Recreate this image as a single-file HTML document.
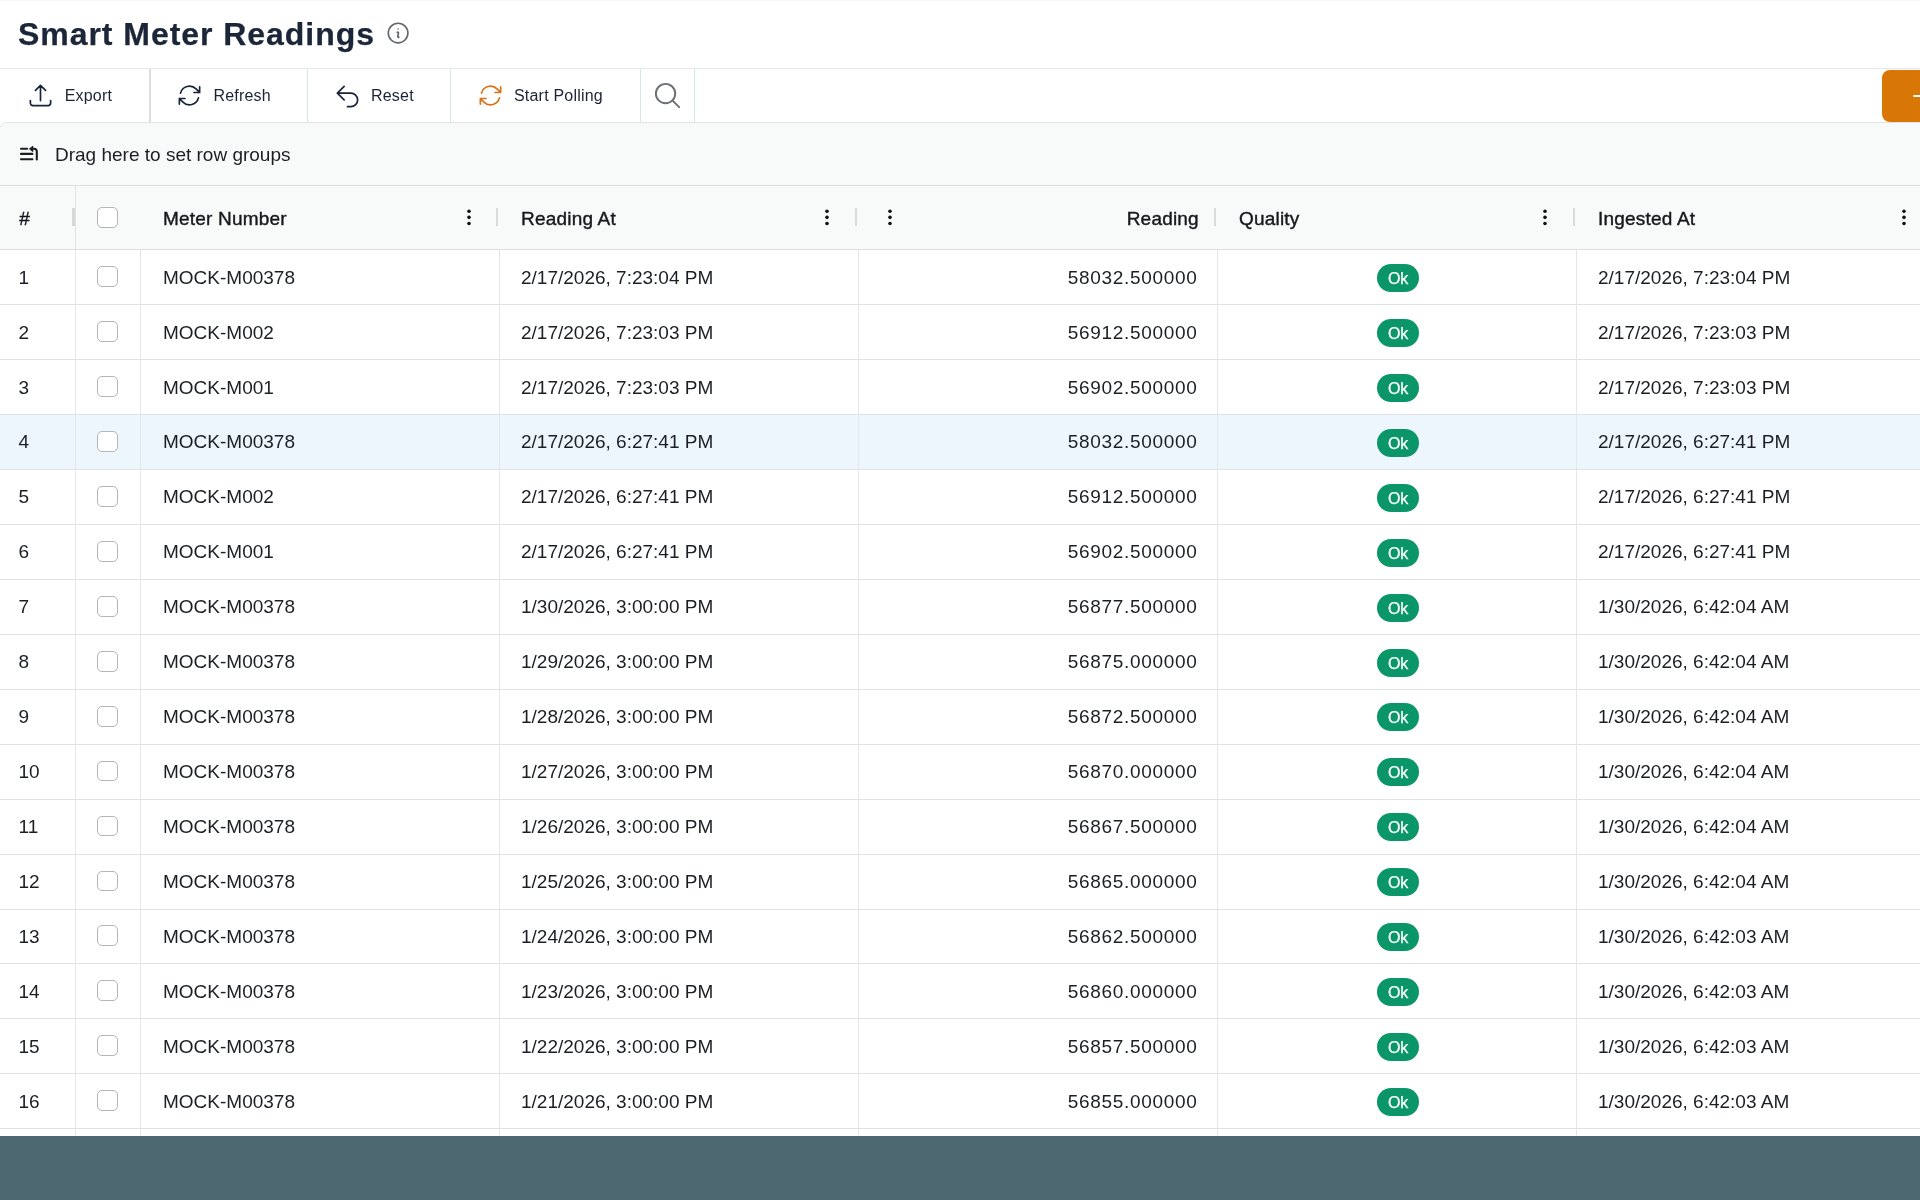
<!DOCTYPE html><html><head><meta charset="utf-8"><title>Smart Meter Readings</title><style>
*{box-sizing:border-box;margin:0;padding:0}
html,body{width:1920px;height:1200px;overflow:hidden;background:#fff}
body{position:relative;will-change:transform;font-family:"Liberation Sans",sans-serif;color:#1b1f24}
.abs{position:absolute}
.title{left:18px;top:14px;font-size:32px;font-weight:bold;color:#1b2638;letter-spacing:0.95px;line-height:40px;white-space:nowrap;-webkit-text-stroke:0.25px #1b2638}
.tb{top:68px;left:0;width:1920px;height:55px;border-top:1px solid #e6e9ea}
.sep{top:69px;width:1px;height:53px;background:#d6e4e6}
.btnlbl{font-size:16px;color:#1a2436;line-height:20px;top:86px;white-space:nowrap;letter-spacing:0.2px}
.orange{left:1882px;top:70px;width:80px;height:52px;background:#d97706;border-radius:8px}
.grid{left:-1.5px;top:122px;width:1940px;height:1100px;border:1px solid #dfe3e4;border-radius:8px 0 0 0;overflow:hidden;background:#fff}
.gpanel{left:0;top:123px;width:1920px;height:63px;background:#f8f9f9;border-bottom:1px solid #dcdfe0}
.hdr{left:0;top:186px;width:1920px;height:64px;background:#f8f9f9;border-bottom:1px solid #dcdfe0}
.txt{white-space:nowrap;line-height:24px}
.cell{font-size:19px;color:#1b1f24}
.hcell{font-size:19px;color:#15191e;-webkit-text-stroke:0.4px #15191e;letter-spacing:0.2px}
.row{left:0;width:1920px;height:55px;border-bottom:1px solid #dfe1e2;background:#fff}
.hl1{left:0;width:1920px;height:1px;background:#dfe1e2}
.vl{width:1px;background:#e4e6e7}
.cb{width:20.8px;height:20.8px;border:1.6px solid #b3b5b6;border-radius:5px;background:#fff}
.badge{width:42px;height:28px;border-radius:14px;background:#0b966a;color:#fff;font-size:16px;line-height:29.5px;text-align:center;letter-spacing:-0.2px;-webkit-text-stroke:0.25px #fff}
.dots{width:4px}
.dot{position:absolute;left:0;width:3.6px;height:3.6px;border-radius:50%;background:#111}
.handle{width:2.2px;height:18.2px;background:#d8dadb;top:208.3px}
.footer{left:0;top:1136px;width:1920px;height:64px;background:#4d6771}
</style></head><body>
<div class="abs" style="left:0;top:0;width:1920px;height:1px;background:#f6f7f7"></div>
<div class="abs title">Smart Meter Readings</div>
<svg class="abs" style="left:384.5px;top:19.5px" width="26.2" height="26.2" viewBox="0 0 24 24" fill="none" stroke="#64686d" stroke-width="1.5" stroke-linecap="round" stroke-linejoin="round"><path d="M11.25 11.25l.041-.02a.75.75 0 011.063.852l-.708 2.836a.75.75 0 001.063.853l.041-.021M21 12a9 9 0 11-18 0 9 9 0 0118 0zm-9-3.75h.008v.008H12V8.25z"/></svg>
<div class="abs tb"></div>
<div class="abs sep" style="left:149px;width:2px;background:#dcdcdc"></div>
<div class="abs sep" style="left:307px;width:1px;background:#d6e6e8"></div>
<div class="abs sep" style="left:450px;width:1px;background:#d6e6e8"></div>
<div class="abs sep" style="left:640px;width:1px;background:#d6e6e8"></div>
<div class="abs sep" style="left:694px;width:1px;background:#d6e6e8"></div>
<svg class="abs" style="left:27.4px;top:82.4px" width="27" height="27" viewBox="0 0 24 24" fill="none" stroke="#19233a" stroke-width="1.5" stroke-linecap="round" stroke-linejoin="round"><path d="M3 16.5v2.25A2.25 2.25 0 005.25 21h13.5A2.25 2.25 0 0021 18.75V16.5m-13.5-9L12 3m0 0l4.5 4.5M12 3v13.5"/></svg>
<svg class="abs" style="left:176px;top:82px" width="27" height="27" viewBox="0 0 24 24" fill="none" stroke="#19233a" stroke-width="1.5" stroke-linecap="round" stroke-linejoin="round"><path d="M16.023 9.348h4.992v-.001M2.985 19.644v-4.992m0 0h4.992m-4.993 0l3.181 3.183a8.25 8.25 0 0013.803-3.7M4.031 9.865a8.25 8.25 0 0113.803-3.7l3.181 3.182m0-4.991v4.99"/></svg>
<svg class="abs" style="left:334.2px;top:82.6px" width="27" height="27" viewBox="0 0 24 24" fill="none" stroke="#19233a" stroke-width="1.5" stroke-linecap="round" stroke-linejoin="round"><path d="M9 15L3 9m0 0l6-6M3 9h12a6 6 0 010 12h-3"/></svg>
<svg class="abs" style="left:477px;top:82px" width="27" height="27" viewBox="0 0 24 24" fill="none" stroke="#d9731a" stroke-width="1.5" stroke-linecap="round" stroke-linejoin="round"><path d="M16.023 9.348h4.992v-.001M2.985 19.644v-4.992m0 0h4.992m-4.993 0l3.181 3.183a8.25 8.25 0 0013.803-3.7M4.031 9.865a8.25 8.25 0 0113.803-3.7l3.181 3.182m0-4.991v4.99"/></svg>
<svg class="abs" style="left:652px;top:80px" width="31" height="31" viewBox="0 0 24 24" fill="none" stroke="#6b6f73" stroke-width="1.5" stroke-linecap="round" stroke-linejoin="round"><path d="M21 21l-5.197-5.197m0 0A7.5 7.5 0 105.196 5.196a7.5 7.5 0 0010.607 10.607z"/></svg>
<div class="abs btnlbl" style="left:64.7px">Export</div>
<div class="abs btnlbl" style="left:213.5px">Refresh</div>
<div class="abs btnlbl" style="left:371px">Reset</div>
<div class="abs btnlbl" style="left:514px">Start Polling</div>
<div class="abs orange"></div>
<div class="abs" style="left:1912.5px;top:95px;width:10px;height:1.6px;background:#fff;border-radius:1px"></div>
<div class="abs grid"></div>
<div class="abs gpanel" style="left:-0.5px;width:1925px;border-radius:7px 0 0 0"></div>
<svg class="abs" style="left:18px;top:144px" width="24" height="20" viewBox="0 0 24 20" fill="none" stroke="#1a1d21" stroke-width="2.1" stroke-linecap="round"><path d="M3 4.7h6.2M3 9.9h11.4M3 15.2h11.4"/><path d="M18.8 15.5V7.5Q18.8 4.7 16 4.7H13.5"/><path d="M11.7 4.7 L14.8 2.2 L14.8 7.2 Z" fill="#1a1d21" stroke-width="1"/></svg>
<div class="abs txt cell" style="left:55px;top:143px;color:#1b1f24">Drag here to set row groups</div>
<div class="abs hdr"></div>
<div class="abs vl" style="left:75px;top:186px;height:63px;background:#e0e3e4"></div>
<div class="abs handle" style="left:72.2px;width:3px;background:#d5d7d8"></div>
<div class="abs txt hcell" style="left:19.3px;top:206.5px">#</div>
<div class="abs cb" style="left:97px;top:207px"></div>
<div class="abs txt hcell" style="left:163px;top:207px">Meter Number</div>
<div class="abs txt hcell" style="left:521px;top:207px">Reading At</div>
<div class="abs txt hcell" style="left:1126.7px;top:207px">Reading</div>
<div class="abs txt hcell" style="left:1239px;top:207px">Quality</div>
<div class="abs txt hcell" style="left:1598px;top:207px">Ingested At</div>
<div class="abs handle" style="left:496px"></div>
<div class="abs handle" style="left:855px"></div>
<div class="abs handle" style="left:1214px"></div>
<div class="abs handle" style="left:1573px"></div>
<svg class="abs" style="left:465.5px;top:208px" width="6" height="20" viewBox="0 0 6 20"><circle cx="3" cy="3.25" r="1.8" fill="#111"/><circle cx="3" cy="9.35" r="1.8" fill="#111"/><circle cx="3" cy="15.55" r="1.8" fill="#111"/></svg>
<svg class="abs" style="left:824px;top:208px" width="6" height="20" viewBox="0 0 6 20"><circle cx="3" cy="3.25" r="1.8" fill="#111"/><circle cx="3" cy="9.35" r="1.8" fill="#111"/><circle cx="3" cy="15.55" r="1.8" fill="#111"/></svg>
<svg class="abs" style="left:886.7px;top:208px" width="6" height="20" viewBox="0 0 6 20"><circle cx="3" cy="3.25" r="1.8" fill="#111"/><circle cx="3" cy="9.35" r="1.8" fill="#111"/><circle cx="3" cy="15.55" r="1.8" fill="#111"/></svg>
<svg class="abs" style="left:1542.4px;top:208px" width="6" height="20" viewBox="0 0 6 20"><circle cx="3" cy="3.25" r="1.8" fill="#111"/><circle cx="3" cy="9.35" r="1.8" fill="#111"/><circle cx="3" cy="15.55" r="1.8" fill="#111"/></svg>
<svg class="abs" style="left:1900.7px;top:208px" width="6" height="20" viewBox="0 0 6 20"><circle cx="3" cy="3.25" r="1.8" fill="#111"/><circle cx="3" cy="9.35" r="1.8" fill="#111"/><circle cx="3" cy="15.55" r="1.8" fill="#111"/></svg>
<div class="abs txt cell" style="left:18.5px;top:265.7px">1</div>
<div class="abs cb" style="left:97px;top:266.3px"></div>
<div class="abs txt cell" style="left:163px;top:265.7px">MOCK-M00378</div>
<div class="abs txt cell" style="left:521px;top:265.7px">2/17/2026, 7:23:04 PM</div>
<div class="abs txt cell" style="right:722.4000000000001px;top:265.7px;letter-spacing:0.7px">58032.500000</div>
<div class="abs badge" style="left:1377px;top:264.0px">Ok</div>
<div class="abs txt cell" style="left:1598px;top:265.7px">2/17/2026, 7:23:04 PM</div>
<div class="abs txt cell" style="left:18.5px;top:320.63px">2</div>
<div class="abs cb" style="left:97px;top:321.23px"></div>
<div class="abs txt cell" style="left:163px;top:320.63px">MOCK-M002</div>
<div class="abs txt cell" style="left:521px;top:320.63px">2/17/2026, 7:23:03 PM</div>
<div class="abs txt cell" style="right:722.4000000000001px;top:320.63px;letter-spacing:0.7px">56912.500000</div>
<div class="abs badge" style="left:1377px;top:318.93px">Ok</div>
<div class="abs txt cell" style="left:1598px;top:320.63px">2/17/2026, 7:23:03 PM</div>
<div class="abs txt cell" style="left:18.5px;top:375.56px">3</div>
<div class="abs cb" style="left:97px;top:376.16px"></div>
<div class="abs txt cell" style="left:163px;top:375.56px">MOCK-M001</div>
<div class="abs txt cell" style="left:521px;top:375.56px">2/17/2026, 7:23:03 PM</div>
<div class="abs txt cell" style="right:722.4000000000001px;top:375.56px;letter-spacing:0.7px">56902.500000</div>
<div class="abs badge" style="left:1377px;top:373.86px">Ok</div>
<div class="abs txt cell" style="left:1598px;top:375.56px">2/17/2026, 7:23:03 PM</div>
<div class="abs" style="left:0;width:1920px;top:414.79px;height:54px;background:#edf5fd"></div>
<div class="abs txt cell" style="left:18.5px;top:430.49px">4</div>
<div class="abs cb" style="left:97px;top:431.09px"></div>
<div class="abs txt cell" style="left:163px;top:430.49px">MOCK-M00378</div>
<div class="abs txt cell" style="left:521px;top:430.49px">2/17/2026, 6:27:41 PM</div>
<div class="abs txt cell" style="right:722.4000000000001px;top:430.49px;letter-spacing:0.7px">58032.500000</div>
<div class="abs badge" style="left:1377px;top:428.79px">Ok</div>
<div class="abs txt cell" style="left:1598px;top:430.49px">2/17/2026, 6:27:41 PM</div>
<div class="abs txt cell" style="left:18.5px;top:485.42px">5</div>
<div class="abs cb" style="left:97px;top:486.02px"></div>
<div class="abs txt cell" style="left:163px;top:485.42px">MOCK-M002</div>
<div class="abs txt cell" style="left:521px;top:485.42px">2/17/2026, 6:27:41 PM</div>
<div class="abs txt cell" style="right:722.4000000000001px;top:485.42px;letter-spacing:0.7px">56912.500000</div>
<div class="abs badge" style="left:1377px;top:483.72px">Ok</div>
<div class="abs txt cell" style="left:1598px;top:485.42px">2/17/2026, 6:27:41 PM</div>
<div class="abs txt cell" style="left:18.5px;top:540.35px">6</div>
<div class="abs cb" style="left:97px;top:540.95px"></div>
<div class="abs txt cell" style="left:163px;top:540.35px">MOCK-M001</div>
<div class="abs txt cell" style="left:521px;top:540.35px">2/17/2026, 6:27:41 PM</div>
<div class="abs txt cell" style="right:722.4000000000001px;top:540.35px;letter-spacing:0.7px">56902.500000</div>
<div class="abs badge" style="left:1377px;top:538.65px">Ok</div>
<div class="abs txt cell" style="left:1598px;top:540.35px">2/17/2026, 6:27:41 PM</div>
<div class="abs txt cell" style="left:18.5px;top:595.28px">7</div>
<div class="abs cb" style="left:97px;top:595.88px"></div>
<div class="abs txt cell" style="left:163px;top:595.28px">MOCK-M00378</div>
<div class="abs txt cell" style="left:521px;top:595.28px">1/30/2026, 3:00:00 PM</div>
<div class="abs txt cell" style="right:722.4000000000001px;top:595.28px;letter-spacing:0.7px">56877.500000</div>
<div class="abs badge" style="left:1377px;top:593.58px">Ok</div>
<div class="abs txt cell" style="left:1598px;top:595.28px">1/30/2026, 6:42:04 AM</div>
<div class="abs txt cell" style="left:18.5px;top:650.21px">8</div>
<div class="abs cb" style="left:97px;top:650.81px"></div>
<div class="abs txt cell" style="left:163px;top:650.21px">MOCK-M00378</div>
<div class="abs txt cell" style="left:521px;top:650.21px">1/29/2026, 3:00:00 PM</div>
<div class="abs txt cell" style="right:722.4000000000001px;top:650.21px;letter-spacing:0.7px">56875.000000</div>
<div class="abs badge" style="left:1377px;top:648.51px">Ok</div>
<div class="abs txt cell" style="left:1598px;top:650.21px">1/30/2026, 6:42:04 AM</div>
<div class="abs txt cell" style="left:18.5px;top:705.14px">9</div>
<div class="abs cb" style="left:97px;top:705.74px"></div>
<div class="abs txt cell" style="left:163px;top:705.14px">MOCK-M00378</div>
<div class="abs txt cell" style="left:521px;top:705.14px">1/28/2026, 3:00:00 PM</div>
<div class="abs txt cell" style="right:722.4000000000001px;top:705.14px;letter-spacing:0.7px">56872.500000</div>
<div class="abs badge" style="left:1377px;top:703.44px">Ok</div>
<div class="abs txt cell" style="left:1598px;top:705.14px">1/30/2026, 6:42:04 AM</div>
<div class="abs txt cell" style="left:18.5px;top:760.07px">10</div>
<div class="abs cb" style="left:97px;top:760.67px"></div>
<div class="abs txt cell" style="left:163px;top:760.07px">MOCK-M00378</div>
<div class="abs txt cell" style="left:521px;top:760.07px">1/27/2026, 3:00:00 PM</div>
<div class="abs txt cell" style="right:722.4000000000001px;top:760.07px;letter-spacing:0.7px">56870.000000</div>
<div class="abs badge" style="left:1377px;top:758.37px">Ok</div>
<div class="abs txt cell" style="left:1598px;top:760.07px">1/30/2026, 6:42:04 AM</div>
<div class="abs txt cell" style="left:18.5px;top:815.0px">11</div>
<div class="abs cb" style="left:97px;top:815.6px"></div>
<div class="abs txt cell" style="left:163px;top:815.0px">MOCK-M00378</div>
<div class="abs txt cell" style="left:521px;top:815.0px">1/26/2026, 3:00:00 PM</div>
<div class="abs txt cell" style="right:722.4000000000001px;top:815.0px;letter-spacing:0.7px">56867.500000</div>
<div class="abs badge" style="left:1377px;top:813.3px">Ok</div>
<div class="abs txt cell" style="left:1598px;top:815.0px">1/30/2026, 6:42:04 AM</div>
<div class="abs txt cell" style="left:18.5px;top:869.93px">12</div>
<div class="abs cb" style="left:97px;top:870.53px"></div>
<div class="abs txt cell" style="left:163px;top:869.93px">MOCK-M00378</div>
<div class="abs txt cell" style="left:521px;top:869.93px">1/25/2026, 3:00:00 PM</div>
<div class="abs txt cell" style="right:722.4000000000001px;top:869.93px;letter-spacing:0.7px">56865.000000</div>
<div class="abs badge" style="left:1377px;top:868.23px">Ok</div>
<div class="abs txt cell" style="left:1598px;top:869.93px">1/30/2026, 6:42:04 AM</div>
<div class="abs txt cell" style="left:18.5px;top:924.86px">13</div>
<div class="abs cb" style="left:97px;top:925.46px"></div>
<div class="abs txt cell" style="left:163px;top:924.86px">MOCK-M00378</div>
<div class="abs txt cell" style="left:521px;top:924.86px">1/24/2026, 3:00:00 PM</div>
<div class="abs txt cell" style="right:722.4000000000001px;top:924.86px;letter-spacing:0.7px">56862.500000</div>
<div class="abs badge" style="left:1377px;top:923.16px">Ok</div>
<div class="abs txt cell" style="left:1598px;top:924.86px">1/30/2026, 6:42:03 AM</div>
<div class="abs txt cell" style="left:18.5px;top:979.79px">14</div>
<div class="abs cb" style="left:97px;top:980.39px"></div>
<div class="abs txt cell" style="left:163px;top:979.79px">MOCK-M00378</div>
<div class="abs txt cell" style="left:521px;top:979.79px">1/23/2026, 3:00:00 PM</div>
<div class="abs txt cell" style="right:722.4000000000001px;top:979.79px;letter-spacing:0.7px">56860.000000</div>
<div class="abs badge" style="left:1377px;top:978.09px">Ok</div>
<div class="abs txt cell" style="left:1598px;top:979.79px">1/30/2026, 6:42:03 AM</div>
<div class="abs txt cell" style="left:18.5px;top:1034.72px">15</div>
<div class="abs cb" style="left:97px;top:1035.32px"></div>
<div class="abs txt cell" style="left:163px;top:1034.72px">MOCK-M00378</div>
<div class="abs txt cell" style="left:521px;top:1034.72px">1/22/2026, 3:00:00 PM</div>
<div class="abs txt cell" style="right:722.4000000000001px;top:1034.72px;letter-spacing:0.7px">56857.500000</div>
<div class="abs badge" style="left:1377px;top:1033.02px">Ok</div>
<div class="abs txt cell" style="left:1598px;top:1034.72px">1/30/2026, 6:42:03 AM</div>
<div class="abs txt cell" style="left:18.5px;top:1089.65px">16</div>
<div class="abs cb" style="left:97px;top:1090.25px"></div>
<div class="abs txt cell" style="left:163px;top:1089.65px">MOCK-M00378</div>
<div class="abs txt cell" style="left:521px;top:1089.65px">1/21/2026, 3:00:00 PM</div>
<div class="abs txt cell" style="right:722.4000000000001px;top:1089.65px;letter-spacing:0.7px">56855.000000</div>
<div class="abs badge" style="left:1377px;top:1087.95px">Ok</div>
<div class="abs txt cell" style="left:1598px;top:1089.65px">1/30/2026, 6:42:03 AM</div>
<div class="abs hl1" style="top:304.3px"></div>
<div class="abs hl1" style="top:359.23px"></div>
<div class="abs hl1" style="top:414.16px"></div>
<div class="abs hl1" style="top:469.09px"></div>
<div class="abs hl1" style="top:524.02px"></div>
<div class="abs hl1" style="top:578.95px"></div>
<div class="abs hl1" style="top:633.88px"></div>
<div class="abs hl1" style="top:688.81px"></div>
<div class="abs hl1" style="top:743.74px"></div>
<div class="abs hl1" style="top:798.67px"></div>
<div class="abs hl1" style="top:853.6px"></div>
<div class="abs hl1" style="top:908.53px"></div>
<div class="abs hl1" style="top:963.46px"></div>
<div class="abs hl1" style="top:1018.39px"></div>
<div class="abs hl1" style="top:1073.32px"></div>
<div class="abs hl1" style="top:1128.25px"></div>
<div class="abs hl1" style="top:1183.18px"></div>
<div class="abs vl" style="left:75px;top:250px;height:900px"></div>
<div class="abs vl" style="left:140px;top:250px;height:900px"></div>
<div class="abs vl" style="left:499px;top:250px;height:900px"></div>
<div class="abs vl" style="left:857.6px;top:250px;height:900px"></div>
<div class="abs vl" style="left:1217px;top:250px;height:900px"></div>
<div class="abs vl" style="left:1575.6px;top:250px;height:900px"></div>
<div class="abs footer"></div>
</body></html>
